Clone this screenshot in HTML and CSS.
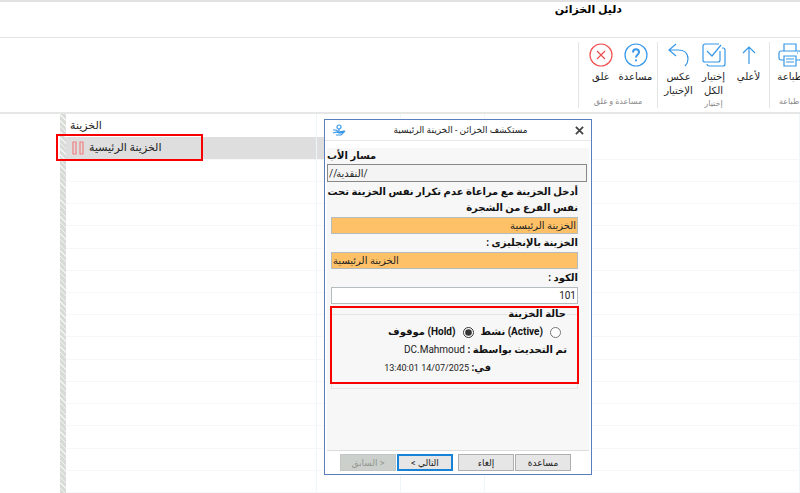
FILE: index.html
```html
<!DOCTYPE html>
<html lang="ar">
  <head>
    <meta charset="UTF-8" />
    <meta name="viewport" content="width=device-width, initial-scale=1.0" />
    <title>دليل الخزائن</title>
    <link rel="stylesheet" href="styles.css">
  </head>
  <body>
    <header class="titlebar">
      <h1 dir="rtl">دليل الخزائن</h1>
    </header>

    <nav class="ribbon">
      <section class="group help-group">
        <div class="tools">
          <button class="tool" type="button">
            <svg class="red" viewBox="0 0 24 24"><circle cx="12" cy="12" r="11" /><path d="M8 8l8 8M16 8l-8 8" /></svg>
            <span>غلق</span>
          </button>
          <button class="tool" type="button">
            <svg viewBox="0 0 24 24"><circle cx="12" cy="12" r="11" /><path class="bold" d="M9 9.500C9 7.500 10.300 6.300 12 6.300s3 1.200 3 2.900c0 2.300-3 2.600-3 5.300M12 16.500v1.800" /></svg>
            <span>مساعدة</span>
          </button>
        </div>
        <p dir="rtl">مساعدة و غلق</p>
      </section>
      <section class="group select-group">
        <div class="tools">
          <button class="tool" type="button">
            <svg viewBox="0 0 24 24"><path d="M9 1L2 7l7 6M2 7h9c6 0 10 3 10 9 0 3-1 5-3 7" /></svg>
            <span>عكس الإختيار</span>
          </button>
          <button class="tool" type="button">
            <svg viewBox="0 0 24 24"><path d="M17 1H3a2 2 0 0 0-2 2v14a2 2 0 0 0 2 2h13a2 2 0 0 0 2-2V8M5 8l5 5L19 2M20 5h1a2 2 0 0 1 2 2v14a2 2 0 0 1-2 2H7a2 2 0 0 1-2-2" /></svg>
            <span>إختيار الكل</span>
          </button>
          <button class="tool" type="button">
            <svg viewBox="0 0 24 24"><path d="M12 21V4M6 10l6-6 6 6" /></svg>
            <span>لأعلي</span>
          </button>
        </div>
        <p>إختيار</p>
      </section>
      <section class="group print-group">
        <div class="tools">
          <button class="tool" type="button">
            <svg viewBox="0 0 24 24"><path d="M6 8V1h12v7M6 17H3a2 2 0 0 1-2-2v-5a2 2 0 0 1 2-2h18a2 2 0 0 1 2 2v5a2 2 0 0 1-2 2h-3M6 13h12v10H6zM8 16h8M8 19h8M19 10h1" /></svg>
            <span>طباعة</span>
          </button>
        </div>
        <p>طباعة</p>
      </section>
    </nav>

    <main class="workspace">
      <div class="splitter"></div>
      <table class="tree">
        <thead>
          <tr><th class="name">الخزينة</th><th class="small"></th><th class="small"></th><th></th></tr>
        </thead>
        <tbody>
          <tr class="selected">
            <td><span class="node"><svg viewBox="0 0 12 14"><path d="M1 1h3v12H1zM8 1h3v12H8z" /></svg>الخزينة الرئيسية</span></td>
            <td></td><td></td><td></td>
          </tr>
          <tr><td></td><td></td><td></td><td></td></tr>
          <tr><td></td><td></td><td></td><td></td></tr>
          <tr><td></td><td></td><td></td><td></td></tr>
          <tr><td></td><td></td><td></td><td></td></tr>
          <tr><td></td><td></td><td></td><td></td></tr>
          <tr><td></td><td></td><td></td><td></td></tr>
          <tr><td></td><td></td><td></td><td></td></tr>
          <tr><td></td><td></td><td></td><td></td></tr>
          <tr><td></td><td></td><td></td><td></td></tr>
          <tr><td></td><td></td><td></td><td></td></tr>
          <tr><td></td><td></td><td></td><td></td></tr>
          <tr><td></td><td></td><td></td><td></td></tr>
          <tr><td></td><td></td><td></td><td></td></tr>
          <tr><td></td><td></td><td></td><td></td></tr>
          <tr><td></td><td></td><td></td><td></td></tr>
        </tbody>
      </table>
      <div class="mark mark-node"></div>

      <form class="dialog" dir="rtl">
        <header class="dialog-title">
          <button class="close" type="button" aria-label="إغلاق"><svg viewBox="0 0 10 10"><path d="M1 1l8 8M9 1L1 9" /></svg></button>
          <h2>مستكشف الخزائن - الخزينة الرئيسية</h2>
          <svg class="app-icon" viewBox="0 0 14 12"><circle cx="7" cy="3" r="2" /><path d="M7 5v2M1 6l3 0 3 2 5-1M1 9l3-1 4 1 5-2-4 4H4" /></svg>
        </header>

        <div class="dialog-body">
          <label class="path-label" for="path">مسار الأب</label>
          <input class="path" id="path" type="text" dir="ltr" value="//النقدية/" readonly />
          <div class="fields">
            <label for="nameAr">أدخل الخزينة مع مراعاة عدم تكرار نفس الخزينة تحت نفس الفرع من الشجرة</label>
            <input class="required" id="nameAr" type="text" value="الخزينة الرئيسية" />
            <label for="nameEn">الخزينة بالإنجليزى :</label>
            <input class="required" id="nameEn" type="text" dir="ltr" value="الخزينة الرئيسية" />
            <label for="code">الكود :</label>
            <input id="code" type="text" value="101" />

            <fieldset>
              <legend>حالة الخزينة</legend>
              <div class="states">
                <input type="radio" name="state" id="active" />
                <label for="active"><bdi dir="ltr">نشط (Active)</bdi></label>
                <input type="radio" name="state" id="hold" checked />
                <label for="hold"><bdi dir="ltr">موقوف (Hold)</bdi></label>
              </div>
              <p><b>تم التحديث بواسطة :</b> <bdi>DC.Mahmoud</bdi></p>
              <p class="date"><b>في:</b> <bdi dir="ltr">13:40:01 14/07/2025</bdi></p>
              <div class="mark mark-state"></div>
            </fieldset>
          </div>
        </div>

        <footer class="actions">
          <button type="button">مساعدة</button>
          <button type="button">إلغاء</button>
          <button class="next" type="submit">التالي &gt;</button>
          <button type="button" disabled>&lt; السابق</button>
        </footer>
      </form>
    </main>
  </body>
</html>
```
FILE: styles.css
```css
* {
  box-sizing: border-box;
}

body {
  display: flex;
  flex-direction: column;
  min-height: 100vh;
  margin: 0;
  overflow-x: hidden;
  font-family: Roboto, "DejaVu Sans", sans-serif;
  font-size: 10px;
  color: #222;
  background-color: #fff;
}

h1,
h2,
p {
  margin: 0;
}

button,
input {
  font-family: inherit;
  font-size: inherit;
  color: inherit;
}

svg {
  fill: none;
  stroke: #3797e8;
  stroke-width: 1.2;
}

.titlebar {
  height: 38px;
  padding: 0 178px 0 0;
  border-top: 2px solid #e2e2e2;
  border-bottom: 1px solid #e4e4e4;
  text-align: right;
}

h1 {
  font-size: 11px;
  line-height: 16px;
  color: #000;
}

/* ribbon */
.ribbon {
  display: flex;
  justify-content: flex-end;
  height: 76px;
  padding: 4px 0;
  border-bottom: 2px solid #e6e6e6;
  overflow: hidden;
}

.group {
  display: flex;
  flex-direction: column;
  justify-content: space-between;
  border-left: 1px solid #e4e4e4;
}

.group p {
  line-height: 12px;
  font-size: 8px;
  text-align: center;
  color: #888;
}

.help-group {
  width: 79px;
}

.select-group {
  width: 112px;
}

.print-group {
  width: 31px;
}

.tools {
  display: flex;
  justify-content: center;
}

.tool {
  display: flex;
  flex-direction: column;
  align-items: center;
  flex: none;
  width: 35px;
  padding: 0;
  border: none;
  background: none;
  line-height: 14px;
}

.tool svg {
  width: 24px;
  height: 24px;
  margin: 1px 0 3px;
}

.tool .red {
  stroke: #f05050;
}

.tool .bold {
  stroke-width: 2;
}

.print-group .tool {
  width: 40px;
}

.print-group .tools,
.print-group p {
  align-self: flex-start;
}

.print-group p {
  padding-left: 9px;
}

/* tree */
.workspace {
  position: relative;
  display: flex;
  flex: 1;
  padding-left: 60px;
}

.splitter {
  width: 6px;
  background: repeating-linear-gradient(45deg, #d8dbd8 0 3px, #f2f4f2 3px 4px);
}

.tree {
  flex: 1;
  table-layout: fixed;
  border-collapse: collapse;
  font-size: 11px;
}

.tree th,
.tree td {
  height: 22px;
  padding: 0 4px;
  border-right: 1px solid #eef6f9;
  border-bottom: 1px solid #f5f7f8;
  font-weight: normal;
  text-align: left;
}

.tree th {
  height: 23px;
  border-bottom: none;
}

.tree .name {
  width: 250px;
}

.tree .small {
  width: 84px;
}

.selected td:first-child,
.selected td:nth-child(2) {
  background-color: #dedede;
}

.node {
  display: flex;
  align-items: center;
  gap: 5px;
  padding-left: 2px;
}

.node svg {
  width: 12px;
  height: 14px;
  stroke: #f08080;
}

.mark {
  position: absolute;
  border: 2px solid #f80000;
}

.mark-node {
  left: 56px;
  top: 20px;
  width: 147px;
  height: 27px;
}

/* dialog */
.dialog {
  position: absolute;
  left: 324px;
  top: 5px;
  display: flex;
  flex-direction: column;
  width: 268px;
  min-height: 356px;
  border: 1px solid #5b7fbd;
  background-color: #fff;
}

.dialog-title {
  display: flex;
  align-items: center;
  justify-content: space-between;
  height: 21px;
  padding: 0 7px;
  border-bottom: 1px solid #e8e8e8;
}

h2 {
  font-size: 9px;
  font-weight: normal;
}

.close {
  display: flex;
  padding: 0;
  border: none;
  background: none;
}

.close svg {
  width: 9px;
  height: 9px;
  stroke: #444;
  stroke-width: 2;
}

.app-icon {
  width: 14px;
  height: 12px;
}

.dialog-body {
  flex: 1;
  margin: 7px 2px 0;
  border-bottom: 1px solid #ddd;
  background-color: #f7f7f7;
}

.dialog label,
legend,
.dialog b {
  font-weight: bold;
  color: #111;
}

.dialog-body label {
  display: block;
  line-height: 16px;
}

.dialog-body input[type="text"] {
  display: block;
  width: 100%;
  height: 17px;
  padding: 0 1px;
  border: 1px solid #b4bcc0;
  background-color: #fff;
}

.dialog-body .path-label {
  direction: ltr;
  text-align: left;
}

.dialog-body input.path {
  width: 260px;
  height: 18px;
  margin-right: 2px;
  border-color: #888;
  background-color: #f4f4f4;
}

.fields {
  padding: 1px 11px 0 4px;
}

.fields > label {
  margin-left: -8px;
  padding: 1px 0;
}

.dialog-body input.required {
  background-color: #ffc168;
}

fieldset {
  position: relative;
  height: 82px;
  margin: 3px 0 0;
  padding: 2px 10px 0;
  border: 1px solid #e4e4e4;
}

legend {
  padding: 0 1px;
  line-height: 14px;
}

.states {
  display: flex;
  align-items: center;
  height: 18px;
  padding-right: 6px;
}

.states input {
  width: 11px;
  height: 11px;
  margin: 0;
  accent-color: #333;
}

.states label {
  margin: 0 7px;
}

fieldset p {
  line-height: 18px;
}

fieldset .date {
  padding-right: 76px;
}

.date bdi {
  font-size: 9px;
}

.mark-state {
  left: -2px;
  right: -2px;
  top: -15px;
  height: 78px;
}

.actions {
  display: flex;
  gap: 1px;
  padding: 3px 20px 3px 0;
}

.actions button {
  width: 56px;
  height: 17px;
  padding: 0;
  border: 1px solid #b0b0b0;
  background-color: #e6e6e6;
  font-size: 9px;
}

.actions .next {
  margin-right: 4px;
  border: 2px solid #1683d8;
}

.actions button:disabled {
  border-color: #c4c8c4;
  background-color: #ccd0cc;
  color: #939893;
}
```
